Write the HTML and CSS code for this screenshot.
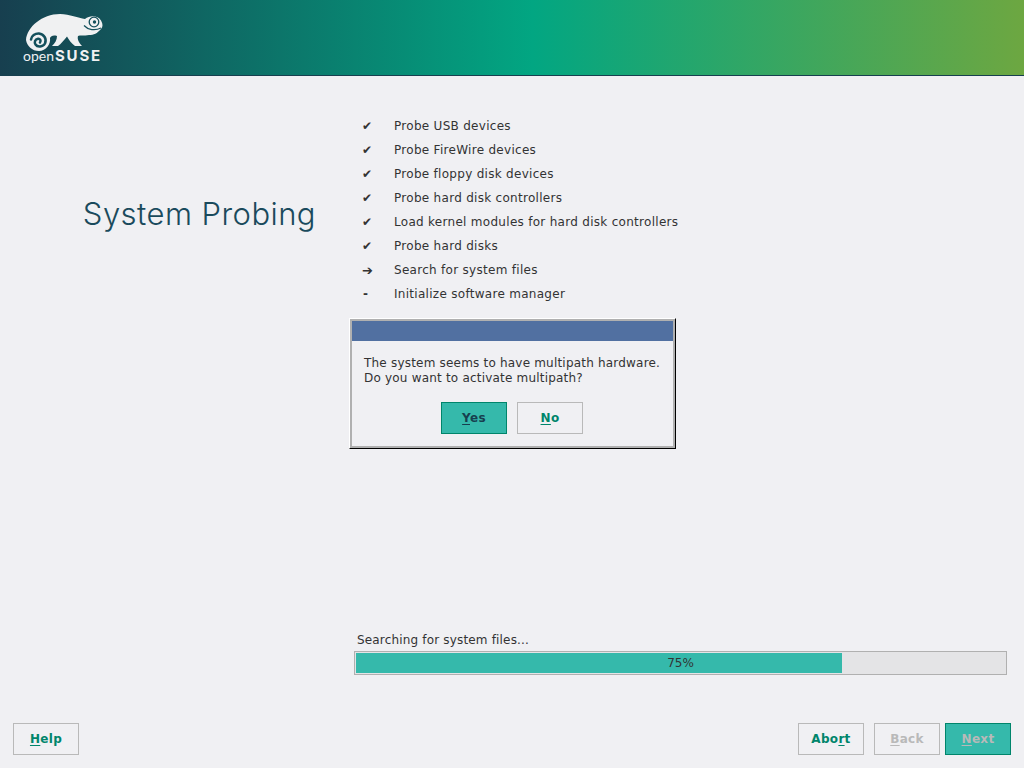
FILE: index.html
```html
<!DOCTYPE html>
<html lang="en">
<head>
    <meta charset="UTF-8">
    <title>System Probing</title>
    <link rel="stylesheet" href="styles.css">
</head>
<body>
    <header class="banner">
        <div class="logo">
            <svg class="logo-mark" width="82" height="40" viewBox="22 12 82 40">
                <path fill="#f0f1f2" d="M26 40C27 27 42 14 60 14C70 14.500 78 18 85 19C90 15 98 15.500 101 20.500C103 24 103 27 101 29C97 33.500 94 35 89 35C84 36 80 35 78 36C77 39 79 43 82 46L75 46C71 43 69 40 67 36.500C64 40 61 44 58 46L52 46C55 43 57 40 57 36C53 35 51 36 50 38C51 44 46 51 39 51C32 51 27 46 26 40Z"/>
                <path fill="none" stroke="#14505c" stroke-width="2.500" stroke-linecap="round" d="M40 42.500C41.500 41 40 38.500 38 38.800C35 39.200 34 42.500 35.500 44.500C37.500 47.500 43 47 45 43.500C47 39 44 34 39 33.500C35 33.300 31.500 36 31 39.500"/>
                <circle cx="94" cy="22" r="4.800" fill="#f0f1f2" stroke="#14505c" stroke-width="1.300"/>
                <circle cx="94.500" cy="22" r="1.700" fill="#14505c"/>
                <path fill="none" stroke="#14505c" stroke-width="1.200" d="M84 25.500C88 30 95 31 101 28"/>
            </svg>
            <div class="logo-name">open<b>SUSE</b></div>
        </div>
    </header>

    <main class="content">
        <div class="probe-row">
            <h1 class="page-title">System Probing</h1>
            <div class="probe-col">
                <ul class="stages">
                    <li><span class="mark">✔</span>Probe USB devices</li>
                    <li><span class="mark">✔</span>Probe FireWire devices</li>
                    <li><span class="mark">✔</span>Probe floppy disk devices</li>
                    <li><span class="mark">✔</span>Probe hard disk controllers</li>
                    <li><span class="mark">✔</span>Load kernel modules for hard disk controllers</li>
                    <li><span class="mark">✔</span>Probe hard disks</li>
                    <li><span class="mark arrow">➔</span>Search for system files</li>
                    <li><span class="mark dash">-</span>Initialize software manager</li>
                </ul>
                <div class="dialog-frame">
                    <div class="dialog">
                        <div class="dialog-title"></div>
                        <div class="dialog-text">
                            <span>The system seems to have multipath hardware.</span>
                            <span>Do you want to activate multipath?</span>
                        </div>
                        <div class="dialog-buttons">
                            <button class="btn primary"><u>Y</u>es</button>
                            <button class="btn"><u>N</u>o</button>
                        </div>
                    </div>
                </div>
            </div>
        </div>

        <div class="progress-wrap">
            <div class="progress-label">Searching for system files...</div>
            <div class="progress">
                <div class="progress-fill"></div>
                <span class="progress-value">75%</span>
            </div>
        </div>
    </main>

    <footer class="actions">
        <button class="btn"><u>H</u>elp</button>
        <div class="actions-right">
            <button class="btn">Abo<u>r</u>t</button>
            <button class="btn disabled"><u>B</u>ack</button>
            <button class="btn primary disabled"><u>N</u>ext</button>
        </div>
    </footer>
</body>
</html>
```

FILE: styles.css
```css
html, body {
    height: 768px;
}
body {
    margin: 0;
    display: flex;
    flex-direction: column;
    overflow: hidden;
    background-color: #f0f0f3;
    color: #333;
    font-family: "DejaVu Sans", sans-serif;
    font-size: 12px;
}
.banner {
    height: 75px;
    flex: none;
    border-bottom: 1px solid #173f4f;
    background: linear-gradient(to right, #173f4f 0%, #02a682 52%, #6da741 100%);
}
.logo {
    padding: 12px 0 0 22px;
    color: #f0f1f2;
}
.logo-mark {
    display: block;
}
.logo-name {
    display: flex;
    align-items: baseline;
    margin-top: -4px;
    padding-left: 1px;
    font-family: Lato, sans-serif;
    font-size: 14px;
    line-height: 15px;
}
.logo-name b {
    margin-left: 1px;
    font-family: Inter, sans-serif;
    font-size: 15px;
    font-weight: 700;
    letter-spacing: 1.8px;
}
.content {
    flex: 1;
    display: flex;
    flex-direction: column;
}
.probe-row {
    display: flex;
    height: 546px;
}
.page-title {
    width: 316px;
    margin: 118px 0 0;
    flex: none;
    text-align: right;
    color: #1a4a5c;
    font-family: Inter, sans-serif;
    font-size: 31px;
    line-height: 40px;
    font-weight: 300;
    letter-spacing: 0.45px;
    white-space: nowrap;
}
.probe-col {
    margin-left: 33px;
}
.stages {
    list-style: none;
    margin: 38px 0 0;
    padding: 0 0 0 13px;
    letter-spacing: 0.29px;
}
.stages li {
    display: flex;
    height: 24px;
    align-items: center;
}
.mark {
    width: 32px;
}
.arrow {
    font-size: 13px;
}
.dash {
    padding-left: 1px;
    width: 31px;
    font-weight: bold;
}
.dialog-frame {
    box-sizing: border-box;
    width: 327px;
    height: 131px;
    margin-top: 12px;
    border: 1px solid;
    border-color: #fff #000 #000 #fff;
}
.dialog {
    height: 125px;
    border: 2px solid #b0b0b0;
}
.dialog-title {
    height: 20px;
    background-color: #5170a1;
}
.dialog-text {
    display: flex;
    flex-direction: column;
    gap: 1px;
    margin: 15px 0 0 12px;
    line-height: 14px;
    letter-spacing: 0.2px;
}
.dialog-buttons {
    display: flex;
    justify-content: center;
    gap: 10px;
    margin-top: 17px;
    padding-right: 1px;
}
.btn {
    width: 66px;
    height: 32px;
    padding: 0 0 1px;
    border: 1px solid #b9b9b9;
    background-color: #f0f0f3;
    color: #00856b;
    font-family: "DejaVu Sans", sans-serif;
    font-size: 12px;
    font-weight: bold;
    letter-spacing: 0.3px;
}
.btn u {
    text-underline-offset: 2px;
}
.btn.primary {
    border-color: #00856b;
    background-color: #35b9ab;
    color: #173f4f;
}
.btn.disabled {
    color: #b9b9b9;
}
.progress-wrap {
    margin: 11px 17px 0 354px;
}
.progress-label {
    margin-left: 3px;
    line-height: 14px;
    letter-spacing: 0.17px;
}
.progress {
    position: relative;
    height: 22px;
    margin-top: 4px;
    border: 1px solid #b0b0b0;
    background-color: #e4e4e6;
}
.progress-fill {
    width: 486px;
    height: 20px;
    margin: 1px;
    background-color: #35b9ab;
}
.progress-value {
    position: absolute;
    top: 0;
    left: 0;
    right: 0;
    text-align: center;
    line-height: 22px;
}
.actions {
    flex: none;
    display: flex;
    justify-content: space-between;
    padding: 0 13px 13px;
}
.actions-right {
    display: flex;
    gap: 10px;
}
.actions-right .primary {
    margin-left: -5px;
}
```
